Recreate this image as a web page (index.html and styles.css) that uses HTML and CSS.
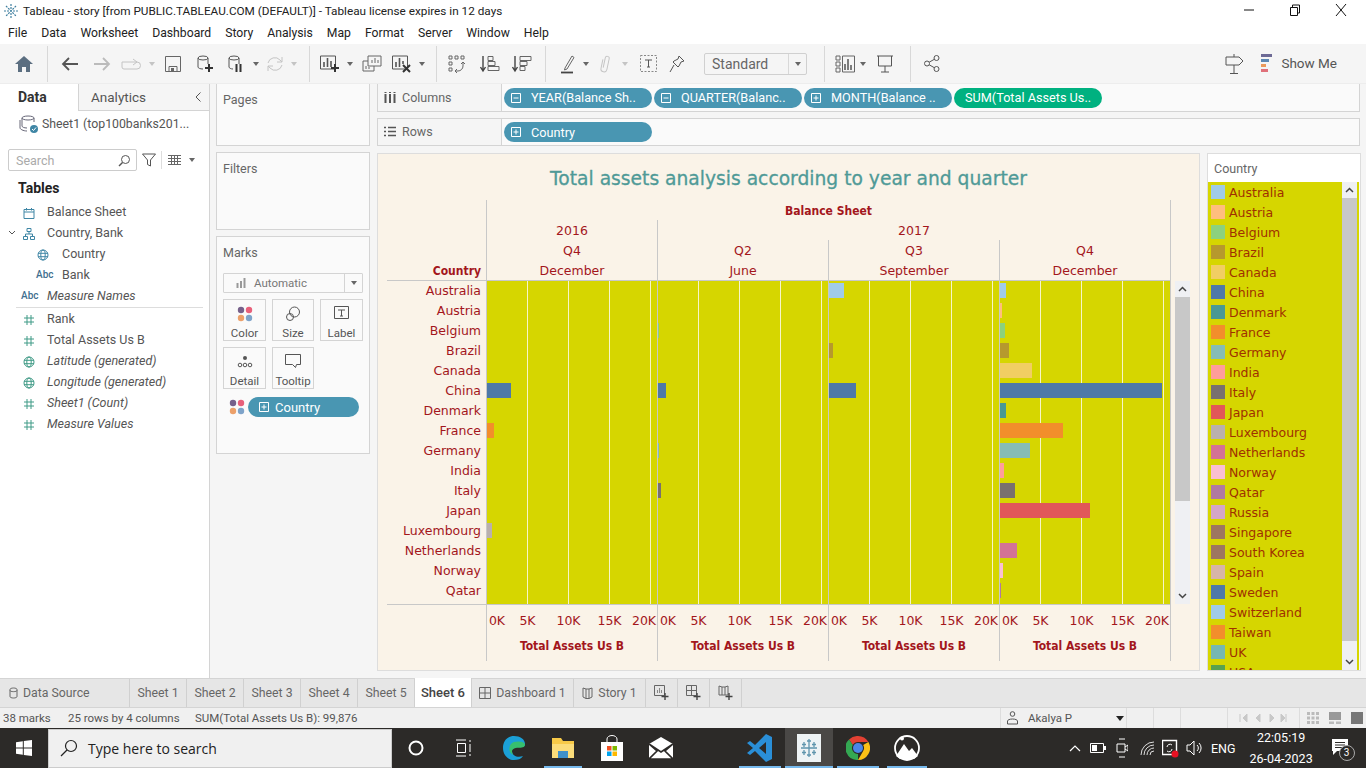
FILE: index.html
```html
<!DOCTYPE html>
<html lang="en">
<head>
    <meta charset="UTF-8">
    <title>Tableau - story</title>
    <link rel="stylesheet" href="styles.css">
</head>
<body>
<svg class="defs" width="0" height="0">
    <symbol id="hash" viewBox="0 0 12 12"><path d="M4 1v10M8 1v10M1 4h10M1 8h10" fill="none" stroke="#3f9a86" stroke-width="1"/></symbol>
    <symbol id="globe" viewBox="0 0 12 12"><g fill="none" stroke="#3f9a86"><circle cx="6" cy="6" r="5"/><ellipse cx="6" cy="6" rx="2.2" ry="5"/><path d="M1 4.3h10M1 7.7h10"/></g></symbol>
    <symbol id="globe-blue" viewBox="0 0 12 12"><g fill="none" stroke="#3f86a5"><circle cx="6" cy="6" r="5"/><ellipse cx="6" cy="6" rx="2.2" ry="5"/><path d="M1 4.3h10M1 7.7h10"/></g></symbol>
    <symbol id="plus-box" viewBox="0 0 10 10"><path d="M.5.5h9v9h-9zM5 2.5v5M2.5 5h5" fill="none" stroke="#fff"/></symbol>
    <symbol id="minus-box" viewBox="0 0 10 10"><path d="M.5.5h9v9h-9zM2.5 5h5" fill="none" stroke="#fff"/></symbol>
    <symbol id="dots" viewBox="0 0 16 16"><circle cx="4" cy="4" r="3.2" fill="#76608a"/><circle cx="12" cy="4" r="3.2" fill="#e8607a"/><circle cx="4" cy="12" r="3.2" fill="#eca06a"/><circle cx="12" cy="12" r="3.2" fill="#7ea3c9"/></symbol>
</svg>

<header class="titlebar">
    <svg class="app-icon" width="16" height="16" viewBox="0 0 16 16"><path d="M8 1v14M1 8h14M3 3l10 10M13 3L3 13" stroke="#3f7f9f" stroke-width="1.2" stroke-dasharray="2 1"/></svg>
    <span class="title-text">Tableau - story [from PUBLIC.TABLEAU.COM (DEFAULT)] - Tableau license expires in 12 days</span>
    <div class="win-btns">
        <svg width="12" height="12" viewBox="0 0 12 12"><path d="M1 6h10" stroke="#111"/></svg>
        <svg width="12" height="12" viewBox="0 0 12 12"><path d="M1.5 3.5h7v8h-7zM3.5 3.5v-2.500h7v8h-2" fill="none" stroke="#111"/></svg>
        <svg width="12" height="12" viewBox="0 0 12 12"><path d="M1 0l10 12M11 0L1 12" stroke="#111"/></svg>
    </div>
</header>
<nav class="menubar">
    <span>File</span><span>Data</span><span>Worksheet</span><span>Dashboard</span><span>Story</span><span>Analysis</span><span>Map</span><span>Format</span><span>Server</span><span>Window</span><span>Help</span>
</nav>

<div class="toolbar">
    <span class="tool w32"><svg width="20" height="18" viewBox="0 0 20 18"><path d="M10 1L1 9h3v8h4v-5h4v5h4V9h3z" fill="#5b6e80"/></svg></span>
    <i class="sep s1"></i>
    <span class="tool w32"><svg width="18" height="14" viewBox="0 0 18 14"><path d="M17 7H2M8 1L2 7l6 6" fill="none" stroke="#555" stroke-width="1.8"/></svg></span>
    <span class="tool w32"><svg width="18" height="14" viewBox="0 0 18 14"><path d="M1 7h15M10 1l6 6-6 6" fill="none" stroke="#bbb" stroke-width="1.8"/></svg></span>
    <span class="tool w26"><svg width="20" height="12" viewBox="0 0 20 12"><path d="M1 4h15a2.500 2.500 0 0 1 0 7H3a2 2 0 0 1-2-2zM12 1l4 3-4 3" fill="none" stroke="#c4c4c4"/></svg></span>
    <span class="tool w16"><b class="tri off"></b></span>
    <span class="tool w26"><svg width="16" height="16" viewBox="0 0 16 16"><path d="M.5.5h15v15H.5zM4 15.500v-5h8v5" fill="none" stroke="#666"/><path d="M6 12h3v3H6z" fill="#666"/></svg></span>
    <span class="tool w38"><svg width="18" height="18" viewBox="0 0 18 18"><g fill="none" stroke="#555"><ellipse cx="7" cy="3" rx="5" ry="2"/><path d="M2 3v9c0 1 2 2 5 2M12 3v6"/></g><path d="M13 9v8M9 13h8" stroke="#333" stroke-width="2"/></svg></span>
    <span class="tool w24"><svg width="18" height="18" viewBox="0 0 18 18"><g fill="none" stroke="#555"><ellipse cx="7" cy="3" rx="5" ry="2"/><path d="M2 3v9c0 1 2 2 4 2M12 3v6"/></g><path d="M9.500 9v8M13.500 9v8" stroke="#333" stroke-width="2"/></svg></span>
    <span class="tool w16"><b class="tri"></b></span>
    <span class="tool w22"><svg width="18" height="18" viewBox="0 0 18 18"><path d="M2 8a7 7 0 0 1 12-3l2 2M16 10a7 7 0 0 1-12 3l-2-2M16 2v5h-5M2 16v-5h5" fill="none" stroke="#c4c4c4"/></svg></span>
    <span class="tool w16"><b class="tri off"></b></span>
    <i class="sep s2"></i>
    <span class="tool w28"><svg width="20" height="18" viewBox="0 0 20 18"><path d="M.5 1h15v13H.5z" fill="none" stroke="#555"/><path d="M4 7v5M7.500 3v9M11 6v6" stroke="#555" stroke-width="1.600"/><path d="M15 9v8M11 13h8" stroke="#333" stroke-width="2"/></svg></span>
    <span class="tool w12"><b class="tri"></b></span>
    <span class="tool w32"><svg width="20" height="18" viewBox="0 0 20 18"><path d="M6 1h13v10H6zM1 6h5M1 6v10h11v-5" fill="none" stroke="#666"/><path d="M10 8V5M13 8V3M16 8V5M4 14v-3M7 14v-2" stroke="#666"/></svg></span>
    <span class="tool w28"><svg width="20" height="18" viewBox="0 0 20 18"><path d="M.5 1h15v13H.5z" fill="none" stroke="#555"/><path d="M4 7v5M7.500 3v9M11 6v3" stroke="#555" stroke-width="1.600"/><path d="M11 10l7 7M18 10l-7 7" stroke="#333" stroke-width="2"/></svg></span>
    <span class="tool w12"><b class="tri"></b></span>
    <i class="sep s3"></i>
    <span class="tool w32"><svg width="18" height="18" viewBox="0 0 18 18"><g fill="none" stroke="#666"><path d="M1 1h3v3H1zM7 1h3v3H7zM13 1h3v3h-3zM1 7h3v3H1zM1 13h3v3H1z"/><path d="M15 7v4a5 5 0 0 1-5 5H7M9 14l-2 2 2 2M13 9l2-2 2 2"/></g></svg></span>
    <span class="tool w32 gap1"><svg width="20" height="18" viewBox="0 0 20 18"><path d="M3 1v14M.5 12L3 16l2.500-4" fill="none" stroke="#444" stroke-width="1.400"/><path d="M8 1.500h5v4H8zM8 6.500h7v4H8zM8 11.500h11v4H8z" fill="none" stroke="#666"/></svg></span>
    <span class="tool w32"><svg width="20" height="18" viewBox="0 0 20 18"><path d="M3 1v14M.5 12L3 16l2.500-4" fill="none" stroke="#444" stroke-width="1.400"/><path d="M8 1.500h11v4H8zM8 6.500h7v4H8zM8 11.500h5v4H8z" fill="none" stroke="#666"/></svg></span>
    <i class="sep s4"></i>
    <span class="tool w28"><svg width="16" height="20" viewBox="0 0 16 20"><path d="M5 14L12 2l2 1.500L7 15l-2.500 1z" fill="none" stroke="#666"/><path d="M1 18.500h12" stroke="#444" stroke-width="1.800"/></svg></span>
    <span class="tool w8"><b class="tri"></b></span>
    <span class="tool w30"><svg width="12" height="20" viewBox="0 0 12 20"><path d="M3 6v9a3 3 0 0 0 6 0V4a2 2 0 0 0-4 0v10" fill="none" stroke="#c4c4c4" transform="rotate(12 6 10)"/></svg></span>
    <span class="tool w10"><b class="tri off"></b></span>
    <span class="tool w36"><svg width="17" height="17" viewBox="0 0 17 17"><path d="M.5.5h16v16H.5z" fill="none" stroke="#888" stroke-dasharray="2 1.500"/><path d="M5 5h7M8.500 5v7M7 12h3" stroke="#555"/></svg></span>
    <span class="tool w22"><svg width="16" height="18" viewBox="0 0 16 18"><path d="M10 1l5 5-3 1-2 4-1 1-5-5 1-1 4-2zM5 10l-4 7" fill="none" stroke="#555"/></svg></span>
    <div class="select"><span>Standard</span><em><b class="tri"></b></em></div>
    <i class="sep s5"></i>
    <span class="tool w28"><svg width="20" height="18" viewBox="0 0 20 18"><path d="M1 1h4v4H1zM1 7h4v4H1zM1 13h4v4H1zM7.500 1h12v16h-12z" fill="none" stroke="#666"/><path d="M10 15V9M13 15V4M16 15v-5" stroke="#555" stroke-width="1.500"/></svg></span>
    <span class="tool w8"><b class="tri"></b></span>
    <span class="tool w36"><svg width="18" height="18" viewBox="0 0 18 18"><path d="M1 1h16M2.500 1v10h13V1M9 11v6M5 17h8" fill="none" stroke="#555"/></svg></span>
    <i class="sep s6"></i>
    <span class="tool w42"><svg width="16" height="17" viewBox="0 0 16 17"><g fill="none" stroke="#555"><circle cx="12.500" cy="3" r="2.500"/><circle cx="3" cy="8.500" r="2.500"/><circle cx="12.500" cy="14" r="2.500"/><path d="M10.300 4.300L5.200 7.200M5.200 9.800l5.100 2.900"/></g></svg></span>
    <span class="tool signpost"><svg width="20" height="22" viewBox="0 0 20 22"><path d="M10 1v3M2 4h13l4 4-4 4H2zM10 12v8M6 20.500h8" fill="none" stroke="#555"/></svg></span>
    <span class="showme"><svg width="14" height="20" viewBox="0 0 14 20"><path d="M1 1h11v3H1z" fill="#6d6a95"/><path d="M1 6h8v3H1z" fill="#5d88b3"/><path d="M1 11h5v3H1z" fill="#eb9a5c"/><path d="M1 16h7v3H1z" fill="#e0707a"/></svg>Show Me</span>
</div>

<main class="workspace">
    <aside class="data-pane">
        <div class="pane-tabs">
            <span class="tab-data">Data</span>
            <span class="tab-analytics">Analytics<svg width="8" height="12" viewBox="0 0 8 12"><path d="M6.500 1.500L2 6l4.500 4.500" fill="none" stroke="#555"/></svg></span>
        </div>
        <div class="source"><svg width="20" height="20" viewBox="0 0 20 20"><g fill="none" stroke="#667"><ellipse cx="9" cy="4" rx="6" ry="2"/><path d="M3 4v8c0 1 2 2 5 2M15 4v4M1 6v8c0 1 3 3 7 3"/></g><circle cx="15" cy="15" r="4" fill="#3f86a5"/><path d="M13 15l1.500 1.500L17 13.500" stroke="#fff" fill="none"/></svg><span>Sheet1 (top100banks201...</span></div>
        <div class="search-row">
            <div class="search"><span>Search</span><svg width="13" height="13" viewBox="0 0 13 13"><circle cx="7.500" cy="5.500" r="4" fill="none" stroke="#555"/><path d="M4.500 8.500L1 12" stroke="#555" stroke-width="1.400"/></svg></div>
            <svg class="funnel" width="14" height="14" viewBox="0 0 14 14"><path d="M.5 1h13L8.500 7v6l-3-1.500V7z" fill="none" stroke="#555"/></svg>
            <i class="mini-sep"></i>
            <svg class="list-ico" width="13" height="10" viewBox="0 0 13 10"><path d="M0 .5h13M0 3.500h13M0 6.500h13M0 9.500h13M3.500 0v10M6.500 0v10M9.500 0v10" stroke="#666" stroke-width="1"/></svg>
            <b class="tri"></b>
        </div>
        <div class="tables-head">Tables</div>
        <ul class="fields">
            <li><span class="ico"><svg width="12" height="12" viewBox="0 0 12 12"><path d="M1 2.500h10v9H1zM1 5h10M3.500 1v2.500M8.500 1v2.500" fill="none" stroke="#3f86a5"/></svg></span>Balance Sheet</li>
            <li><svg class="chev" width="8" height="6" viewBox="0 0 8 6"><path d="M1 1l3 3 3-3" fill="none" stroke="#555"/></svg><span class="ico"><svg width="12" height="12" viewBox="0 0 12 12"><path d="M4 .5h4v3H4zM.5 8.500h4v3h-4zM7.500 8.500h4v3h-4zM6 3.500V6M2.500 8.500V6h7v2.500" fill="none" stroke="#3f86a5"/></svg></span>Country, Bank</li>
            <li class="sub"><span class="ico"><svg width="12" height="12"><use href="#globe-blue"/></svg></span>Country</li>
            <li class="sub"><span class="abc">Abc</span>Bank</li>
            <li class="ital ruled"><span class="abc">Abc</span>Measure Names</li>
            <li class="after-rule"><span class="ico"><svg width="12" height="12"><use href="#hash"/></svg></span>Rank</li>
            <li><span class="ico"><svg width="12" height="12"><use href="#hash"/></svg></span>Total Assets Us B</li>
            <li class="ital"><span class="ico"><svg width="12" height="12"><use href="#globe"/></svg></span>Latitude (generated)</li>
            <li class="ital"><span class="ico"><svg width="12" height="12"><use href="#globe"/></svg></span>Longitude (generated)</li>
            <li class="ital"><span class="ico"><svg width="12" height="12"><use href="#hash"/></svg></span>Sheet1 (Count)</li>
            <li class="ital"><span class="ico"><svg width="12" height="12"><use href="#hash"/></svg></span>Measure Values</li>
        </ul>
    </aside>

    <section class="cards">
        <div class="card card-pages"><h4>Pages</h4></div>
        <div class="card card-filters"><h4>Filters</h4></div>
        <div class="card card-marks">
            <h4>Marks</h4>
            <div class="marktype"><svg width="10" height="10" viewBox="0 0 10 10"><path d="M1.500 10V5M5 10V3M8.500 10V0" stroke="#999" stroke-width="2"/></svg><span>Automatic</span><em><b class="tri"></b></em></div>
            <div class="mark-btns">
                <div class="mbtn"><svg width="16" height="16"><use href="#dots"/></svg><span>Color</span></div>
                <div class="mbtn"><svg width="16" height="16" viewBox="0 0 16 16"><g fill="none" stroke="#555"><circle cx="9.500" cy="6" r="5"/><circle cx="5" cy="11" r="3.500"/></g></svg><span>Size</span></div>
                <div class="mbtn"><svg width="15" height="15" viewBox="0 0 15 15"><path d="M.5.5h14v12H.5zM4 4h7M7.500 4v6M6 10h3" fill="none" stroke="#555"/></svg><span>Label</span></div>
                <div class="mbtn"><svg width="16" height="14" viewBox="0 0 16 14"><g fill="none" stroke="#555"><circle cx="3" cy="11" r="1.800"/><circle cx="8" cy="11" r="1.800"/><circle cx="13" cy="11" r="1.800"/></g><circle cx="8" cy="4" r="2" fill="#555"/></svg><span>Detail</span></div>
                <div class="mbtn"><svg width="16" height="14" viewBox="0 0 16 14"><path d="M.5.500h15v10h-4l-1 3-3-3H.5z" fill="none" stroke="#555"/></svg><span>Tooltip</span></div>
            </div>
            <div class="mark-field">
                <svg width="16" height="16"><use href="#dots"/></svg>
                <span class="pill pill-marks"><svg width="10" height="10"><use href="#plus-box"/></svg>Country</span>
            </div>
        </div>
    </section>

    <section class="canvas">
        <div class="shelf">
            <div class="shelf-label"><svg width="12" height="11" viewBox="0 0 12 11"><path d="M1.500 2v9M6 2v9M10.500 2v9M1.500 0v1M6 0v1M10.500 0v1" stroke="#555" stroke-width="2"/></svg>Columns</div>
            <div class="shelf-pills">
                <span class="pill"><svg width="10" height="10"><use href="#minus-box"/></svg>YEAR(Balance Sh..</span>
                <span class="pill"><svg width="10" height="10"><use href="#minus-box"/></svg>QUARTER(Balanc..</span>
                <span class="pill"><svg width="10" height="10"><use href="#plus-box"/></svg>MONTH(Balance ..</span>
                <span class="pill pill-green">SUM(Total Assets Us..</span>
            </div>
        </div>
        <div class="shelf">
            <div class="shelf-label label-rows"><svg width="12" height="11" viewBox="0 0 12 11"><path d="M0 1.500h2M4 1.500h8M0 5.500h2M4 5.500h8M0 9.500h2M4 9.500h8" stroke="#555" stroke-width="1.600"/></svg>Rows</div>
            <div class="shelf-pills"><span class="pill"><svg width="10" height="10"><use href="#plus-box"/></svg>Country</span></div>
        </div>

        <div class="view-area">
            <div class="viz-panel">
                <h2 class="viz-title">Total assets analysis according to year and quarter</h2>
                <div class="viz">
                    <div class="head">
                        <span></span><span class="hcell hb wide4">Balance Sheet</span>
                        <span></span><span class="hcell">2016</span><span class="hcell wide3">2017</span>
                        <span></span><span class="hcell">Q4</span><span class="hcell">Q2</span><span class="hcell">Q3</span><span class="hcell">Q4</span>
                        <span class="corner">Country</span><span class="hcell">December</span><span class="hcell">June</span><span class="hcell">September</span><span class="hcell">December</span>
                    </div>
                    <div class="plot-wrap">
                        <div class="plot">
                            <div class="row"><span class="name">Australia</span><span class="cell"></span><span class="cell"></span><span class="cell"><i class="bar c-aus" style="width:15px"></i></span><span class="cell"><i class="bar c-aus" style="width:6px"></i></span></div>
                            <div class="row"><span class="name">Austria</span><span class="cell"></span><span class="cell"></span><span class="cell"></span><span class="cell"><i class="bar c-aut" style="width:2px"></i></span></div>
                            <div class="row"><span class="name">Belgium</span><span class="cell"></span><span class="cell"><i class="bar c-bel" style="width:1px"></i></span><span class="cell"></span><span class="cell"><i class="bar c-bel" style="width:5px"></i></span></div>
                            <div class="row"><span class="name">Brazil</span><span class="cell"></span><span class="cell"></span><span class="cell"><i class="bar c-bra" style="width:4px"></i></span><span class="cell"><i class="bar c-bra" style="width:9px"></i></span></div>
                            <div class="row"><span class="name">Canada</span><span class="cell"></span><span class="cell"></span><span class="cell"></span><span class="cell"><i class="bar c-can" style="width:32px"></i></span></div>
                            <div class="row"><span class="name">China</span><span class="cell"><i class="bar c-chi" style="width:24px"></i></span><span class="cell"><i class="bar c-chi" style="width:8px"></i></span><span class="cell"><i class="bar c-chi" style="width:27px"></i></span><span class="cell"><i class="bar c-chi" style="width:162px"></i></span></div>
                            <div class="row"><span class="name">Denmark</span><span class="cell"></span><span class="cell"></span><span class="cell"></span><span class="cell"><i class="bar c-den" style="width:6px"></i></span></div>
                            <div class="row"><span class="name">France</span><span class="cell"><i class="bar c-fra" style="width:7px"></i></span><span class="cell"></span><span class="cell"></span><span class="cell"><i class="bar c-fra" style="width:63px"></i></span></div>
                            <div class="row"><span class="name">Germany</span><span class="cell"></span><span class="cell"><i class="bar c-ger" style="width:1px"></i></span><span class="cell"></span><span class="cell"><i class="bar c-ger" style="width:30px"></i></span></div>
                            <div class="row"><span class="name">India</span><span class="cell"></span><span class="cell"></span><span class="cell"></span><span class="cell"><i class="bar c-ind" style="width:4px"></i></span></div>
                            <div class="row"><span class="name">Italy</span><span class="cell"></span><span class="cell"><i class="bar c-ita" style="width:3px"></i></span><span class="cell"></span><span class="cell"><i class="bar c-ita" style="width:15px"></i></span></div>
                            <div class="row"><span class="name">Japan</span><span class="cell"></span><span class="cell"></span><span class="cell"></span><span class="cell"><i class="bar c-jap" style="width:90px"></i></span></div>
                            <div class="row"><span class="name">Luxembourg</span><span class="cell"><i class="bar c-lux" style="width:5px"></i></span><span class="cell"></span><span class="cell"></span><span class="cell"></span></div>
                            <div class="row"><span class="name">Netherlands</span><span class="cell"></span><span class="cell"></span><span class="cell"></span><span class="cell"><i class="bar c-net" style="width:17px"></i></span></div>
                            <div class="row"><span class="name">Norway</span><span class="cell"></span><span class="cell"></span><span class="cell"></span><span class="cell"><i class="bar c-nor" style="width:3px"></i></span></div>
                            <div class="row row-last"><span class="name">Qatar</span><span class="cell"></span><span class="cell"></span><span class="cell"></span><span class="cell"><i class="bar c-qat" style="width:1px"></i></span></div>
                        </div>
                        <div class="scroll viz-scroll">
                            <span class="arrow"><svg width="9" height="6" viewBox="0 0 9 6"><path d="M1 5l3.500-3.500L8 5" fill="none" stroke="#444" stroke-width="1.500"/></svg></span>
                            <span class="thumb"></span>
                            <span class="arrow arrow-end"><svg width="9" height="6" viewBox="0 0 9 6"><path d="M1 1l3.500 3.500L8 1" fill="none" stroke="#444" stroke-width="1.500"/></svg></span>
                        </div>
                    </div>
                    <div class="axis">
                        <span></span>
                        <div class="ax"><div class="ticks"><span>0K</span><span>5K</span><span>10K</span><span>15K</span><span>20K</span></div><b>Total Assets Us B</b></div>
                        <div class="ax"><div class="ticks"><span>0K</span><span>5K</span><span>10K</span><span>15K</span><span>20K</span></div><b>Total Assets Us B</b></div>
                        <div class="ax"><div class="ticks"><span>0K</span><span>5K</span><span>10K</span><span>15K</span><span>20K</span></div><b>Total Assets Us B</b></div>
                        <div class="ax"><div class="ticks"><span>0K</span><span>5K</span><span>10K</span><span>15K</span><span>20K</span></div><b>Total Assets Us B</b></div>
                    </div>
                </div>
            </div>

            <aside class="legend">
                <div class="legend-head">Country</div>
                <div class="legend-body">
                    <ul class="legend-list">
                        <li><i class="c-aus"></i>Australia</li>
                        <li><i class="c-aut"></i>Austria</li>
                        <li><i class="c-bel"></i>Belgium</li>
                        <li><i class="c-bra"></i>Brazil</li>
                        <li><i class="c-can"></i>Canada</li>
                        <li><i class="c-chi"></i>China</li>
                        <li><i class="c-den"></i>Denmark</li>
                        <li><i class="c-fra"></i>France</li>
                        <li><i class="c-ger"></i>Germany</li>
                        <li><i class="c-ind"></i>India</li>
                        <li><i class="c-ita"></i>Italy</li>
                        <li><i class="c-jap"></i>Japan</li>
                        <li><i class="c-lux"></i>Luxembourg</li>
                        <li><i class="c-net"></i>Netherlands</li>
                        <li><i class="c-nor"></i>Norway</li>
                        <li><i class="c-qat"></i>Qatar</li>
                        <li><i class="c-rus"></i>Russia</li>
                        <li><i class="c-sin"></i>Singapore</li>
                        <li><i class="c-kor"></i>South Korea</li>
                        <li><i class="c-spa"></i>Spain</li>
                        <li><i class="c-swe"></i>Sweden</li>
                        <li><i class="c-swi"></i>Switzerland</li>
                        <li><i class="c-tai"></i>Taiwan</li>
                        <li><i class="c-uk"></i>UK</li>
                        <li><i class="c-usa"></i>USA</li>
                    </ul>
                    <div class="scroll legend-scroll">
                        <span class="arrow"><svg width="9" height="6" viewBox="0 0 9 6"><path d="M1 5l3.500-3.500L8 5" fill="none" stroke="#444" stroke-width="1.500"/></svg></span>
                        <span class="thumb"></span>
                        <span class="arrow arrow-end"><svg width="9" height="6" viewBox="0 0 9 6"><path d="M1 1l3.500 3.500L8 1" fill="none" stroke="#444" stroke-width="1.500"/></svg></span>
                    </div>
                </div>
            </aside>
        </div>
    </section>
</main>

<div class="sheet-tabs">
    <span class="stab st-source"><svg width="9" height="12" viewBox="0 0 9 12"><path d="M1 2.500c0-2 7-2 7 0v7c0 2-7 2-7 0zM1 3.500c0 1.500 7 1.500 7 0" fill="none" stroke="#666"/></svg>Data Source</span>
    <span class="stab st-sheet">Sheet 1</span>
    <span class="stab st-sheet">Sheet 2</span>
    <span class="stab st-sheet">Sheet 3</span>
    <span class="stab st-sheet">Sheet 4</span>
    <span class="stab st-sheet">Sheet 5</span>
    <span class="stab st-sheet st-active">Sheet 6</span>
    <span class="stab st-dash"><svg width="12" height="12" viewBox="0 0 12 12"><path d="M.5.500h11v11H.5zM.5 6h11M6 .5v11" fill="none" stroke="#666"/></svg>Dashboard 1</span>
    <span class="stab st-story"><svg width="11" height="12" viewBox="0 0 11 12"><path d="M1 1l3 1h3l3-1v9l-3 1.500H4L1 10zM4 2v9.500M7 2v9.500" fill="none" stroke="#666"/></svg>Story 1</span>
    <span class="stab st-new"><svg width="15" height="15" viewBox="0 0 15 15"><path d="M.5.500h10v10H.5z" fill="none" stroke="#666"/><path d="M3.500 8V5M5.500 8V3M7.500 8V5" stroke="#888"/><path d="M11 8v7M7.500 11.500h7" stroke="#444" stroke-width="1.400"/></svg></span>
    <span class="stab st-new"><svg width="15" height="15" viewBox="0 0 15 15"><path d="M.5.500h10v10H.5zM.5 5.500h10M5.500.5v10" fill="none" stroke="#666"/><path d="M11 8v7M7.500 11.500h7" stroke="#444" stroke-width="1.400"/></svg></span>
    <span class="stab st-new"><svg width="15" height="15" viewBox="0 0 15 15"><path d="M1 1l3 1h3l3-1v9H1zM4 2v8M7 2v8" fill="none" stroke="#666"/><path d="M11 8v7M7.500 11.500h7" stroke="#444" stroke-width="1.400"/></svg></span>
</div>

<div class="statusbar">
    <span class="st-marks">38 marks</span>
    <span class="st-rows">25 rows by 4 columns</span>
    <span>SUM(Total Assets Us B): 99,876</span>
    <div class="st-user"><svg width="11" height="14" viewBox="0 0 11 14"><circle cx="5.500" cy="3" r="2.300" fill="none" stroke="#555"/><path d="M.5 13V10c0-1 2-2 5-2s5 1 5 2v3z" fill="none" stroke="#555"/></svg><span>Akalya P</span><b class="tri tri-dark"></b></div>
    <i class="st-box"></i>
    <i class="st-box"></i>
    <i class="st-box b3"></i>
    <div class="st-nav">
        <svg width="48" height="10" viewBox="0 0 48 10"><path d="M1 1v8M8 1L4 5l4 4zM21 1l-4 4 4 4zM31 1l4 4-4 4zM42 1l4 4-4 4zM47 1v8" fill="#c8c8c8" stroke="#c8c8c8"/></svg>
    </div>
    <div class="st-view">
        <svg width="12" height="12" viewBox="0 0 12 12"><path d="M0 0h3v3H0zM4.500 0h3v3h-3zM9 0h3v3H9zM0 4.500h3v3H0zM4.500 4.500h3v3h-3zM9 4.500h3v3H9zM0 9h3v3H0zM4.500 9h3v3h-3zM9 9h3v3H9z" fill="#bbb"/></svg>
        <svg width="12" height="12" viewBox="0 0 12 12"><path d="M0 0h12v8H0z" fill="#999"/><path d="M0 9.500h5V12H0zM7 9.500h5V12H7z" fill="#bbb"/></svg>
        <svg width="12" height="12" viewBox="0 0 12 12"><path d="M0 0h12v12H0z" fill="#777"/></svg>
    </div>
</div>

<footer class="taskbar">
    <span class="start"><svg width="16" height="16" viewBox="0 0 16 16"><path d="M0 2.200L6.800 1.200V7.500H0zM7.800 1L16 0v7.500H7.800zM0 8.500h6.800v6.300L0 13.800zM7.800 8.500H16V16l-8.200-1.100z" fill="#fff"/></svg></span>
    <div class="task-search"><svg width="18" height="18" viewBox="0 0 18 18"><circle cx="11" cy="7" r="5.500" fill="none" stroke="#222" stroke-width="1.200"/><path d="M7 11l-6 6" stroke="#222" stroke-width="1.200"/></svg><span>Type here to search</span></div>
    <span class="tk tk-cortana"><svg width="16" height="16" viewBox="0 0 16 16"><circle cx="8" cy="8" r="6.500" fill="none" stroke="#fff" stroke-width="2"/></svg></span>
    <span class="tk tk-view"><svg width="18" height="18" viewBox="0 0 18 18"><path d="M1 1h10M1 17h10M2.500 4.500h8v9h-8zM15 1v2M15 5v8M15 15v2" fill="none" stroke="#fff"/></svg></span>
    <span class="tk tk-edge"><svg width="24" height="26" viewBox="0 0 24 26"><path d="M12 1C5 1 1 6 1 13c0 7 5 12 11 12 4 0 7-1 9-4-5 2-11 0-11-5 0-3 3-4 6-4 5 0 7 0 7-3C23 4 18 1 12 1z" fill="#1ba0d7"/><path d="M23 9c0 3-2 4-7 3.800-3 0-6 1-6 4 0 1 .5 2 1 3C6 18 6 9 12 7c4-1 9-1 11 2z" fill="#37c06f"/></svg></span>
    <span class="tk tk-folder running"><svg width="24" height="22" viewBox="0 0 24 22"><path d="M1 1h9l2 3h11v17H1z" fill="#f7c948"/><path d="M1 7h22v14H1z" fill="#fbdc7a"/><path d="M7 14h10v7H7z" fill="#3f90c9"/></svg></span>
    <span class="tk tk-store"><svg width="24" height="26" viewBox="0 0 24 26"><path d="M7 7V4a5 3.500 0 0 1 10 0v3" fill="none" stroke="#fff"/><path d="M1 7h22v19H1z" fill="#fff"/><path d="M7 11h4.500v4.500H7z" fill="#f25022"/><path d="M12.500 11H17v4.500h-4.500z" fill="#7fba00"/><path d="M7 16.500h4.500V21H7z" fill="#00a4ef"/><path d="M12.500 16.500H17V21h-4.500z" fill="#ffb900"/></svg></span>
    <span class="tk tk-mail"><svg width="24" height="22" viewBox="0 0 24 22"><path d="M0 7L12 0l12 7v15H0z" fill="#fff"/><path d="M0 7l12 8 12-8-8 7 8 8H0l8-8z" fill="none" stroke="#2c2a28" stroke-width="1.600"/></svg></span>
    <span class="tk tk-code running"><svg width="26" height="30" viewBox="0 0 26 30"><path d="M19 1l6 3v22l-6 3-11-11-5 4-3-2 6-5-6-5 3-2 5 4zM19 9l-7 6 7 6z" fill="#2a8fd8" fill-rule="evenodd"/></svg></span>
    <span class="tk tk-tableau running"><span class="tab-square"><svg width="20" height="22" viewBox="0 0 20 22"><path d="M10 2v18M2 11h16M5 5v5M15 5v5M5 13v5M15 13v5M3 7.500h4M13 7.500h4M3 15.500h4M13 15.500h4M8 4h4M8 18h4" stroke="#5f95ad" stroke-width="1.300"/></svg></span></span>
    <span class="tk tk-chrome running"><svg width="24" height="24" viewBox="0 0 24 24"><path d="M12 0a12 12 0 0 1 10.400 6H12a6 6 0 0 0-5.200 3L3 3.500A12 12 0 0 1 12 0z" fill="#e34133"/><path d="M22.400 6A12 12 0 0 1 12 24l5.200-9a6 6 0 0 0 0-6z" fill="#fbc116"/><path d="M12 24A12 12 0 0 1 3 3.500L6.800 9a6 6 0 0 0 5.200 9z" fill="#34a853"/><circle cx="12" cy="12" r="5" fill="#4a86e8"/></svg></span>
    <span class="tk tk-photo running"><svg width="26" height="26" viewBox="0 0 26 26"><circle cx="13" cy="13" r="12" fill="none" stroke="#fff" stroke-width="1.800"/><path d="M2 21L10 9l5 7 3-3 6 8-4 3H6z" fill="#fff"/><circle cx="8" cy="3.500" r="2" fill="#fff"/></svg></span>
    <div class="tray">
        <svg class="t-up" width="12" height="8" viewBox="0 0 12 8"><path d="M1 7l5-5 5 5" fill="none" stroke="#fff" stroke-width="1.200"/></svg>
        <svg class="t-bat" width="16" height="10" viewBox="0 0 16 10"><path d="M.5.500h13v9H.5z" fill="none" stroke="#fff"/><path d="M2 2h5v6H2zM14 3h2v4h-2z" fill="#fff"/></svg>
        <svg class="t-cam" width="12" height="20" viewBox="0 0 12 20"><path d="M3 1h6M3 19h6M1 6h8v8H1zM9 9l3-2v6l-3-2" fill="none" stroke="#fff"/></svg>
        <svg class="t-wifi" width="15" height="15" viewBox="0 0 15 15"><path d="M1 14a13 13 0 0 1 13-13M4 14a10 10 0 0 1 10-10M7 14a7 7 0 0 1 7-7M10 14a4 4 0 0 1 4-4" fill="none" stroke="#ddd"/></svg>
        <svg class="t-tab" width="17" height="20" viewBox="0 0 17 20"><path d="M.5 2.500h14v14H.5z" fill="none" stroke="#fff" stroke-width="1.400"/><path d="M5 9a3 3 0 0 1 5-2M10 11a3 3 0 0 1-5 2" stroke="#fff" fill="none"/><circle cx="13" cy="16" r="3.500" fill="#e81123"/></svg>
        <svg class="t-vol" width="17" height="16" viewBox="0 0 17 16"><path d="M1 5h3l4-4v14l-4-4H1zM11 5a4 4 0 0 1 0 6M13 3a7 7 0 0 1 0 10" fill="none" stroke="#fff"/></svg>
        <span class="t-eng">ENG</span>
        <span class="t-clock"><span>22:05:19</span><span>26-04-2023</span></span>
        <span class="t-note"><svg width="16" height="16" viewBox="0 0 16 16"><path d="M0 0h16v12H5l-4 4v-4H0z" fill="#fff"/><path d="M3 3.500h10M3 6h10M3 8.500h7" stroke="#2c2a28"/></svg><b>3</b></span>
    </div>
</footer>
</body>
</html>
```

FILE: styles.css
```css
* {
    box-sizing: border-box;
}
html, body {
    margin: 0;
    height: 768px;
    overflow: hidden;
}
body {
    width: 1366px;
    font-family: 'Roboto', sans-serif;
    font-size: 12.5px;
    color: #555;
    background: #fff;
    display: flex;
    flex-direction: column;
}
.defs {
    position: absolute;
}
ul {
    list-style: none;
    margin: 0;
    padding: 0;
}
i, em {
    font-style: normal;
}

/* title + menu */
.titlebar {
    height: 22px;
    display: flex;
    align-items: center;
    padding-left: 3px;
    color: #222;
    font-size: 11.75px;
}
.app-icon {
    margin-right: 4px;
}
.win-btns {
    margin-left: auto;
    display: flex;
    gap: 34px;
    padding-right: 19px;
    margin-top: -3px;
}
.menubar {
    height: 22px;
    display: flex;
    align-items: center;
    gap: 14px;
    padding-left: 8px;
    color: #222;
    font-size: 12.2px;
}

/* toolbar */
.toolbar {
    height: 40px;
    background: #f5f5f5;
    display: flex;
    align-items: center;
    padding-left: 8px;
    border-bottom: 1px solid #ededed;
}
.tool {
    height: 30px;
    display: flex;
    align-items: center;
    justify-content: center;
    flex: none;
}
.w8 { width: 8px; }
.w10 { width: 10px; }
.w12 { width: 12px; }
.w16 { width: 16px; }
.w22 { width: 22px; }
.w24 { width: 24px; }
.w26 { width: 26px; }
.w28 { width: 28px; }
.w30 { width: 30px; }
.w32 { width: 32px; }
.w36 { width: 36px; }
.w38 { width: 38px; }
.w42 { width: 42px; }
.gap1 { margin-left: 1px; }
.tri {
    display: inline-block;
    width: 0;
    height: 0;
    border-left: 3px solid transparent;
    border-right: 3px solid transparent;
    border-top: 4px solid #666;
}
.tri.off {
    border-top-color: #c4c4c4;
}
.tri-dark {
    border-left-width: 4px;
    border-right-width: 4px;
    border-top: 5px solid #222;
}
.sep {
    width: 1px;
    height: 36px;
    background: #d8d8d8;
    flex: none;
}
.s1 { margin: 0 6px 0 7px; }
.s2 { margin: 0 6px 0 7px; }
.s3 { margin: 0 4px 0 8px; }
.s4 { margin: 0 8px 0 7px; }
.s5 { margin: 0 6px 0 17px; }
.s6 { margin: 0 0 0 7px; }
.select {
    width: 103px;
    height: 22px;
    margin-left: 16px;
    border: 1px solid #d0d0d0;
    border-radius: 2px;
    display: flex;
    align-items: center;
    justify-content: space-between;
    padding-left: 7px;
    font-size: 14px;
    color: #666;
}
.select em {
    width: 18px;
    height: 100%;
    border-left: 1px solid #d8d8d8;
    display: flex;
    align-items: center;
    justify-content: center;
}
.signpost {
    margin-left: auto;
    margin-right: 16px;
}
.showme {
    display: flex;
    align-items: center;
    gap: 7px;
    padding: 0 29px 2px 0;
    font-size: 13.5px;
    color: #555;
}

/* main */
.workspace {
    height: 594px;
    display: flex;
    overflow: hidden;
}
.data-pane {
    width: 210px;
    flex: none;
    background: #fff;
    border-right: 1px solid #d4d4d4;
}
.pane-tabs {
    display: flex;
    height: 27px;
}
.tab-data {
    width: 78px;
    padding: 5px 0 0 18px;
    font-weight: 700;
    font-size: 14px;
    color: #333;
}
.tab-analytics {
    flex: 1;
    background: #f5f5f5;
    border: 1px solid #d4d4d4;
    border-width: 0 0 1px 1px;
    padding: 5px 7px 0 12px;
    font-size: 13.5px;
    display: flex;
    justify-content: space-between;
}
.tab-analytics svg {
    margin-top: 2px;
}
.source {
    display: flex;
    align-items: center;
    gap: 3px;
    height: 26px;
    padding-left: 19px;
    color: #555;
    font-size: 12.3px;
}
.search-row {
    display: flex;
    align-items: center;
    height: 22px;
    margin-top: 12px;
    padding-left: 8px;
}
.search {
    width: 129px;
    height: 22px;
    border: 1px solid #ccc;
    border-radius: 2px;
    display: flex;
    align-items: center;
    justify-content: space-between;
    padding: 0 5px 0 7px;
    color: #aaa;
}
.funnel {
    margin-left: 5px;
}
.mini-sep {
    width: 1px;
    height: 18px;
    background: #ddd;
    margin: 0 6px 0 5px;
}
.list-ico {
    margin-right: 8px;
}
.tables-head {
    font-weight: 700;
    font-size: 14px;
    color: #222;
    padding: 9px 0 0 18px;
    height: 30px;
}
.fields li {
    position: relative;
    height: 21px;
    padding-left: 47px;
    line-height: 21px;
    color: #555;
}
.fields .ico {
    position: absolute;
    left: 23px;
    top: 3px;
}
.fields .chev {
    position: absolute;
    left: 8px;
    top: 8px;
}
.fields .sub {
    padding-left: 62px;
}
.sub .ico {
    left: 37px;
}
.abc {
    position: absolute;
    left: 21px;
    top: 0;
    font-size: 10px;
    color: #3f6f8f;
    font-weight: 500;
}
.sub .abc {
    left: 36px;
}
.ital {
    font-style: italic;
}
.ital .abc {
    font-style: normal;
}
.ruled::after {
    content: "";
    position: absolute;
    left: 16px;
    right: 6px;
    bottom: -2px;
    height: 1px;
    background: #ddd;
}
.after-rule {
    margin-top: 2px;
}

/* cards column */
.cards {
    width: 162px;
    flex: none;
    background: #f5f5f5;
    padding-left: 6px;
    padding-right: 2px;
}
.card {
    background: #fafafa;
    border: 1px solid #d4d4d4;
    margin-bottom: 6px;
    padding: 8px 6px;
}
.card h4 {
    margin: 0;
    font-weight: 400;
    font-size: 12.5px;
    color: #666;
}
.card-pages {
    height: 62px;
    border-top: none;
}
.card-filters {
    height: 78px;
}
.card-marks {
    height: 218px;
}
.marktype {
    display: flex;
    align-items: center;
    height: 20px;
    margin-top: 13px;
    padding-left: 12px;
    border: 1px solid #d4d4d4;
    border-radius: 1px;
    font-size: 11.5px;
    color: #777;
}
.marktype span {
    margin-left: 8px;
}
.marktype em {
    margin-left: auto;
    width: 18px;
    height: 100%;
    border-left: 1px solid #d4d4d4;
    display: flex;
    align-items: center;
    justify-content: center;
}
.mark-btns {
    display: grid;
    grid-template-columns: 43px 42px 43px;
    grid-auto-rows: 42px;
    gap: 6px;
    margin-top: 6px;
}
.mbtn {
    border: 1px solid #d4d4d4;
    display: flex;
    flex-direction: column;
    align-items: center;
    justify-content: space-between;
    padding-top: 6px;
    font-size: 11.5px;
    color: #555;
}
.mark-field {
    display: flex;
    align-items: center;
    gap: 3px;
    margin-top: 8px;
    padding-left: 6px;
}

/* pills */
.pill {
    width: 148px;
    height: 20px;
    border-radius: 10px;
    background: #4996b2;
    color: #fff;
    font-size: 12.7px;
    display: flex;
    align-items: center;
    gap: 10px;
    padding-left: 7px;
    white-space: nowrap;
}
.pill-green {
    background: #00b180;
    padding-left: 11px;
}
.pill-marks {
    width: 111px;
    padding-left: 11px;
    gap: 6px;
    font-size: 13px;
}

/* shelves + view */
.canvas {
    flex: 1;
    min-width: 0;
    background: #f5f5f5;
    padding-left: 5px;
}
.shelf {
    height: 28px;
    display: flex;
    margin-bottom: 6px;
    width: 983px;
    border: 1px solid #d4d4d4;
    background: #fafafa;
}
.shelf:first-child {
    border-top: none;
}
.shelf-label {
    width: 124px;
    border-right: 1px solid #d4d4d4;
    display: flex;
    align-items: center;
    gap: 6px;
    padding-left: 6px;
    color: #666;
    background: #f5f5f5;
}
.label-rows {
    padding-bottom: 2px;
}
.shelf-pills {
    display: flex;
    align-items: center;
    gap: 2px;
    padding-left: 2px;
}
.view-area {
    display: flex;
    gap: 7px;
    margin-top: 7px;
}
.viz-panel {
    width: 823px;
    height: 518px;
    background: #faf3e8;
    border: 1px solid #ddd;
    font-family: 'DejaVu Sans', sans-serif;
    font-size: 12.5px;
    color: #a3161c;
    padding-left: 9px;
}
.viz-title {
    margin: 0 0 0 -9px;
    height: 46px;
    padding-top: 13px;
    font-weight: 400;
    font-size: 18.7px;
    line-height: 24px;
    color: #4f9a97;
    text-align: center;
    -webkit-text-stroke: .3px #4f9a97;
}
.viz {
    width: 804px;
}
.head {
    display: grid;
    grid-template-columns: 99px repeat(4, 171px);
    grid-auto-rows: 20px;
    width: 784px;
    height: 81px;
    border-bottom: 1px solid #c8c8c8;
    border-right: 1px solid #c8c8c8;
}
.hcell {
    text-align: center;
    line-height: 22px;
    border-left: 1px solid #c8c8c8;
}
.hb {
    font-family: 'DejaVu Sans Condensed', 'DejaVu Sans', sans-serif;
    font-weight: 700;
    font-size: 12px;
}
.wide4 {
    grid-column: span 4;
}
.wide3 {
    grid-column: span 3;
}
.corner {
    font-family: 'DejaVu Sans Condensed', 'DejaVu Sans', sans-serif;
    font-weight: 700;
    font-size: 12px;
    text-align: right;
    padding-right: 5px;
    line-height: 22px;
}
.plot-wrap {
    display: flex;
}
.plot {
    width: 784px;
    border-bottom: 1px solid #c8c8c8;
    border-right: 1px solid #c8c8c8;
}
.row {
    display: grid;
    grid-template-columns: 99px repeat(4, 171px);
    height: 20px;
}
.row-last {
    height: 23px;
}
.name {
    text-align: right;
    padding-right: 5px;
    line-height: 20px;
}
.cell {
    display: block;
    border-left: 1px solid #c8c8c8;
    background: #d6d600 repeating-linear-gradient(90deg, transparent 0 40px, #f7f5c8 40px 41px);
}
.bar {
    display: block;
    height: 15px;
    margin-top: 2px;
}
.scroll {
    display: flex;
    flex-direction: column;
    width: 15px;
    background: #eff0f3;
}
.viz-scroll {
    margin-left: 4px;
    height: 323px;
}
.arrow {
    height: 16px;
    display: flex;
    align-items: center;
    justify-content: center;
    flex: none;
}
.arrow-end {
    margin-top: auto;
}
.thumb {
    background: #c8c8c8;
}
.viz-scroll .thumb {
    height: 204px;
}
.axis {
    display: grid;
    grid-template-columns: 99px repeat(4, 171px);
    width: 784px;
    height: 56px;
    border-right: 1px solid #c8c8c8;
}
.ax {
    border-left: 1px solid #c8c8c8;
    text-align: center;
}
.ticks {
    display: grid;
    grid-template-columns: 20px 41px 41px 41px 28px;
    height: 29px;
    line-height: 31px;
}
.ax b {
    font-family: 'DejaVu Sans Condensed', 'DejaVu Sans', sans-serif;
    font-size: 12px;
    line-height: 24px;
}

/* legend */
.legend {
    width: 154px;
    height: 518px;
    border: 1px solid #ddd;
    background: #fafafa;
}
.legend-head {
    height: 28px;
    background: #fff;
    padding: 7px 0 0 6px;
    color: #666;
}
.legend-body {
    position: relative;
    width: 151px;
    height: 488px;
    overflow: hidden;
    background: #d6d600;
    font-family: 'DejaVu Sans', sans-serif;
    font-size: 12.5px;
    color: #a03000;
}
.legend-list li {
    display: flex;
    align-items: center;
    height: 20px;
    padding-left: 3px;
}
.legend-list i {
    width: 14px;
    height: 14px;
    margin-right: 4px;
}
.legend-scroll {
    position: absolute;
    top: 0;
    left: 134px;
    height: 488px;
}
.legend-scroll .thumb {
    height: 443px;
}

.c-aus { background: #a0cbe8; }
.c-aut { background: #ffbe7d; }
.c-bel { background: #8cd17d; }
.c-bra { background: #b6992d; }
.c-can { background: #f1ce63; }
.c-chi { background: #4e79a7; }
.c-den { background: #499894; }
.c-fra { background: #f28e2b; }
.c-ger { background: #86bcb6; }
.c-ind { background: #ff9d9a; }
.c-ita { background: #79706e; }
.c-jap { background: #e15759; }
.c-lux { background: #bab0ac; }
.c-net { background: #d37295; }
.c-nor { background: #fabfd2; }
.c-qat { background: #b07aa1; }
.c-rus { background: #d4a6c8; }
.c-sin { background: #9d7660; }
.c-kor { background: #9d7660; }
.c-spa { background: #d7b5a6; }
.c-swe { background: #4e79a7; }
.c-swi { background: #a0cbe8; }
.c-tai { background: #f28e2b; }
.c-uk { background: #76b7b2; }
.c-usa { background: #59a14f; }

/* sheet tabs */
.sheet-tabs {
    height: 30px;
    display: flex;
    background: #e6e6e6;
    border-top: 1px solid #d4d4d4;
    border-bottom: 1px solid #d4d4d4;
}
.stab {
    display: flex;
    align-items: center;
    justify-content: center;
    gap: 5px;
    padding-bottom: 1px;
    font-size: 12.3px;
    color: #666;
    border-right: 1px solid #d0d0d0;
    flex: none;
}
.st-source {
    width: 130px;
    justify-content: flex-start;
    padding-left: 9px;
}
.st-sheet {
    width: 57px;
}
.st-active {
    background: #fff;
    font-weight: 500;
    font-size: 13px;
    color: #444;
    margin-top: -1px;
}
.st-dash {
    width: 102px;
}
.st-story {
    width: 72px;
}
.st-new {
    width: 32px;
}

/* status */
.statusbar {
    height: 20px;
    display: flex;
    align-items: center;
    background: #f0f0f0;
    font-size: 11.5px;
    padding-left: 3px;
    color: #555;
    white-space: nowrap;
}
.st-marks {
    width: 65px;
}
.st-rows {
    width: 127px;
}
.st-user {
    margin-left: auto;
    width: 127px;
    height: 100%;
    display: flex;
    align-items: center;
    padding-left: 6px;
    border-left: 1px solid #ddd;
    border-right: 1px solid #ddd;
}
.st-user span {
    margin: 0 44px 0 10px;
}
.st-box {
    width: 27px;
    height: 100%;
    border-right: 1px solid #ddd;
}
.b3 {
    width: 47px;
}
.st-nav {
    width: 72px;
    padding-left: 11px;
    height: 100%;
    display: flex;
    align-items: center;
    border-right: 1px solid #ddd;
}
.st-view {
    display: flex;
    gap: 10px;
    padding: 0 3px 0 7px;
}

/* taskbar */
.taskbar {
    height: 40px;
    background: #2c2a28;
    display: flex;
    align-items: center;
    color: #fff;
}
.start {
    width: 48px;
    display: flex;
    justify-content: center;
}
.task-search {
    width: 344px;
    height: 39px;
    background: #f0f0f0;
    border: 1px solid #ccc;
    color: #222;
    display: flex;
    align-items: center;
    gap: 10px;
    padding-left: 11px;
    font-size: 14px;
    font-family: 'Open Sans', sans-serif;
    flex: none;
}
.tk {
    height: 40px;
    display: flex;
    align-items: center;
    justify-content: center;
    flex: none;
    position: relative;
}
.tk-cortana { width: 48px; }
.tk-view { width: 48px; }
.tk-edge { width: 52px; }
.tk-folder { width: 46px; }
.tk-store { width: 52px; }
.tk-mail { width: 46px; }
.tk-code { width: 50px; margin-left: 51px; }
.tk-tableau { width: 48px; background: #4a4846; }
.tk-chrome { width: 50px; }
.tk-photo { width: 48px; }
.running::after {
    content: "";
    position: absolute;
    left: 4px;
    right: 4px;
    bottom: 0;
    height: 2px;
    background: #76b9ed;
}
.tk-tableau::after {
    left: 0;
    right: 0;
}
.tab-square {
    width: 24px;
    height: 28px;
    background: #eef3f5;
    display: flex;
    align-items: center;
    justify-content: center;
}
.tray {
    flex: 1;
    display: flex;
    align-items: center;
    height: 100%;
    font-size: 12.5px;
}
.t-up { margin-left: 138px; }
.t-bat { margin-left: 9px; }
.t-cam { margin-left: 10px; }
.t-wifi { margin-left: 12px; }
.t-tab { margin-left: 7px; }
.t-vol { margin-left: 7px; }
.t-eng { margin-left: 8px; }
.t-clock {
    display: flex;
    flex-direction: column;
    align-items: center;
    margin-left: 14px;
    line-height: 21px;
}
.t-note {
    position: relative;
    margin-left: 19px;
}
.t-note b {
    position: absolute;
    left: 7px;
    top: 6px;
    width: 16px;
    height: 16px;
    border-radius: 50%;
    background: #2c2a28;
    border: 1px solid #aaa;
    font-weight: 400;
    font-size: 10px;
    text-align: center;
    line-height: 14px;
}
```
